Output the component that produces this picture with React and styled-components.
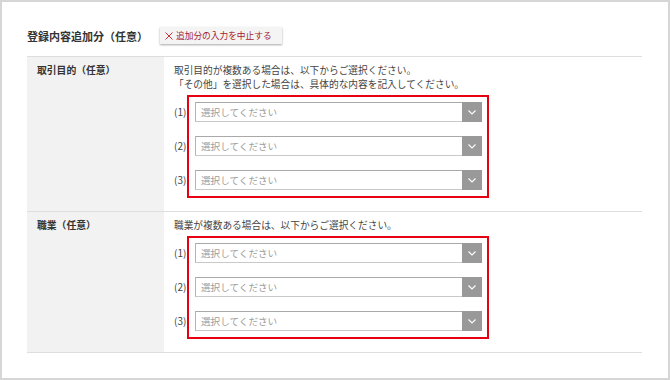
import styled, { createGlobalStyle } from "styled-components";

const GlobalStyle = createGlobalStyle`
	html, body {
		margin: 0;
		padding: 0;
		background: #fff;
	}
	body {
		font-family: "Noto Sans CJK JP", "Noto Sans", sans-serif;
		color: #333;
	}
`;

const Frame = styled.div`
	box-sizing: border-box;
	width: 670px;
	height: 380px;
	border: 2px solid #d6d6d6;
	padding: 0 26px 0 25px;
`;

const Header = styled.div`
	display: flex;
	align-items: center;
	height: 19px;
	margin-top: 24px;
	margin-bottom: 11px;
	.title {
		font-size: 11px;
		font-weight: bold;
		color: #333;
		width: 133px;
		white-space: nowrap;
	}
`;

const CancelButton = styled.div`
	display: flex;
	align-items: center;
	gap: 3px;
	box-sizing: border-box;
	width: 122px;
	height: 17px;
	padding-left: 5px;
	background: #f4f4f4;
	box-shadow: 0 1px 2px rgba(0, 0, 0, 0.35);
	font-size: 8.7px;
	color: #a3202f;
	white-space: nowrap;
	svg {
		flex: none;
	}
`;

const Table = styled.div`
	border-top: 1px solid #dedede;
`;

const Row = styled.div`
	display: grid;
	grid-template-columns: 137px 1fr;
	border-bottom: 1px solid #dedede;
`;

const Label = styled.div`
	background: #f2f2f2;
	padding: 6px 10px;
	font-size: 9.8px;
	font-weight: bold;
	line-height: 14px;
	color: #333;
`;

const Body = styled.div`
	padding: 6px 10px 21px 10px;
	font-size: 9.7px;
	line-height: 14px;
	color: #444;
	p {
		margin: 0;
		white-space: nowrap;
	}
`;

const SelectGroup = styled.div`
	position: relative;
	display: flex;
	flex-direction: column;
	gap: 14px;
	margin-top: 11px;
	width: 308px;
`;

const RedFrame = styled.div`
	position: absolute;
	top: -7px;
	bottom: -8px;
	left: 13px;
	width: 302px;
	box-sizing: border-box;
	border: 2px solid #e60012;
	pointer-events: none;
`;

const SelectRow = styled.div`
	display: flex;
	align-items: center;
	.num {
		width: 21px;
		font-size: 10px;
		color: #444;
	}
`;

const Select = styled.div`
	display: flex;
	box-sizing: border-box;
	width: 287px;
	height: 20px;
	border: 1px solid #c9c9c9;
	border-top-color: #a9a9a9;
	border-left-color: #b5b5b5;
	background: #fff;
	.text {
		flex: 1;
		padding-left: 5px;
		font-size: 9.6px;
		line-height: 18px;
		color: #9c9c9c;
	}
	.arrow {
		width: 20px;
		margin: -1px -1px -1px 0;
		background: #999;
		display: flex;
		align-items: center;
		justify-content: center;
	}
`;

function Dropdown({ n }) {
	return (
		<SelectRow>
			<span className="num">({n})</span>
			<Select>
				<span className="text">選択してください</span>
				<span className="arrow">
					<svg width="8" height="5" viewBox="0 0 8 5">
						<path d="M0.5 0.5 L4 4 L7.5 0.5" fill="none" stroke="#fff" strokeWidth="1.1" />
					</svg>
				</span>
			</Select>
		</SelectRow>
	);
}

function Dropdowns() {
	return (
		<SelectGroup>
			<Dropdown n={1} />
			<Dropdown n={2} />
			<Dropdown n={3} />
			<RedFrame />
		</SelectGroup>
	);
}

export default function App() {
	return (
		<>
			<GlobalStyle />
			<Frame>
				<Header>
					<div className="title">登録内容追加分（任意）</div>
					<CancelButton>
						<svg width="8" height="8" viewBox="0 0 8 8">
							<path d="M0.5 0.5 L7.5 7.5 M7.5 0.5 L0.5 7.5" stroke="#d0303c" strokeWidth="1" />
						</svg>
						<span>追加分の入力を中止する</span>
					</CancelButton>
				</Header>
				<Table>
					<Row>
						<Label>取引目的（任意）</Label>
						<Body>
							<p>取引目的が複数ある場合は、以下からご選択ください。</p>
							<p>「その他」を選択した場合は、具体的な内容を記入してください。</p>
							<Dropdowns />
						</Body>
					</Row>
					<Row>
						<Label>職業（任意）</Label>
						<Body>
							<p>職業が複数ある場合は、以下からご選択ください。</p>
							<Dropdowns />
						</Body>
					</Row>
				</Table>
			</Frame>
		</>
	);
}
